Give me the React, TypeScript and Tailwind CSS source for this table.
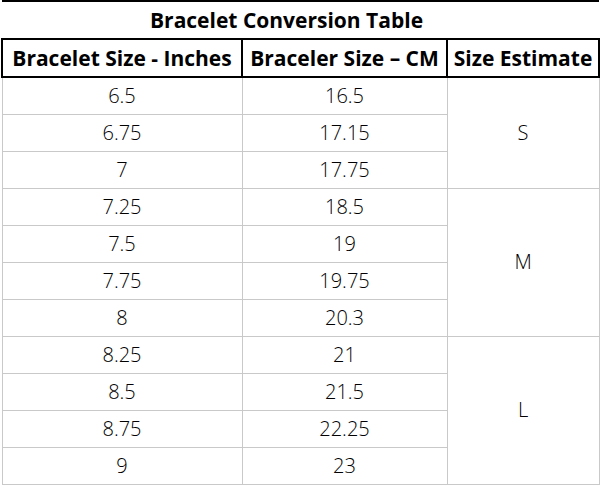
import React from 'react';

const rows = [
  { inch: '6.5', cm: '16.5' },
  { inch: '6.75', cm: '17.15' },
  { inch: '7', cm: '17.75' },
  { inch: '7.25', cm: '18.5' },
  { inch: '7.5', cm: '19' },
  { inch: '7.75', cm: '19.75' },
  { inch: '8', cm: '20.3' },
  { inch: '8.25', cm: '21' },
  { inch: '8.5', cm: '21.5' },
  { inch: '8.75', cm: '22.25' },
  { inch: '9', cm: '23' },
];

// first row index of each size group -> [label, span]
const groups: Record<number, [string, number]> = {
  0: ['S', 3],
  3: ['M', 4],
  7: ['L', 4],
};

export default function App() {
  return (
    <main className="w-[600px] h-[488px] bg-white font-['Open_Sans',sans-serif] text-black">
      <table className="ml-[1px] w-[597px] table-fixed border-collapse">
        <colgroup>
          <col className="w-[240px]" />
          <col className="w-[205px]" />
          <col className="w-[152px]" />
        </colgroup>
        <thead>
          <tr className="h-[38px]">
            <th colSpan={3} className="border-t-2 border-black text-[21px] font-bold text-center p-0 pr-[28px] leading-none">
              Bracelet Conversion Table
            </th>
          </tr>
          <tr className="h-[38px]">
            <th className="border-2 border-black text-[21px] font-bold p-0 leading-none">Bracelet Size - Inches</th>
            <th className="border-2 border-black text-[21px] font-bold p-0 leading-none">Braceler Size – CM</th>
            <th className="border-2 border-black text-[21px] font-bold p-0 leading-none">Size Estimate</th>
          </tr>
        </thead>
        <tbody>
          {rows.map((r, i) => (
            <tr key={r.inch} className="h-[37px]">
              <td className="border border-[#c9c9c9] text-center text-[20px] font-light p-0 leading-none">{r.inch}</td>
              <td className="border border-[#c9c9c9] text-center text-[20px] font-light p-0 leading-none">{r.cm}</td>
              {groups[i] && (
                <td rowSpan={groups[i][1]} className="border border-[#c9c9c9] text-center text-[20px] font-light p-0 leading-none">
                  {groups[i][0]}
                </td>
              )}
            </tr>
          ))}
        </tbody>
      </table>
    </main>
  );
}
